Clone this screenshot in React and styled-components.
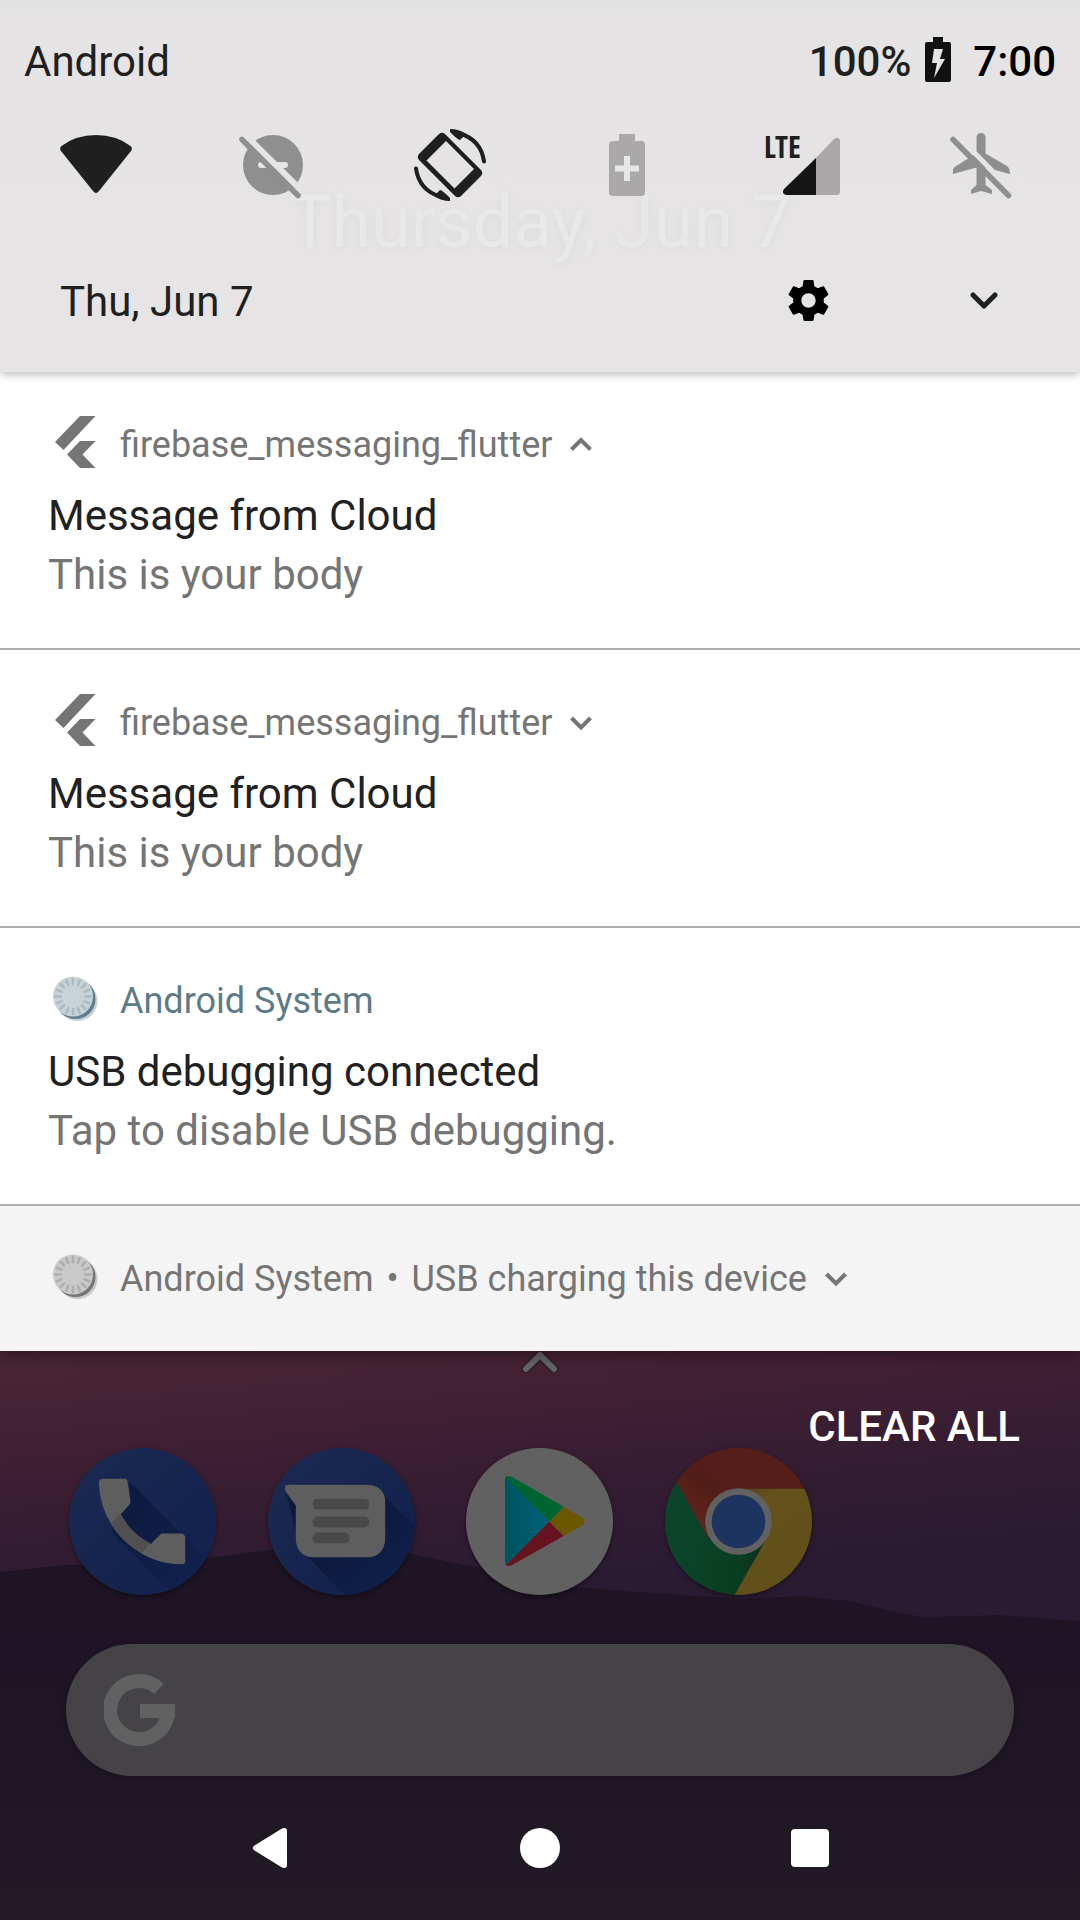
import React from "react";
import styled, { createGlobalStyle } from "styled-components";

const Global = createGlobalStyle`
  *, *::before, *::after { box-sizing: border-box; }
  body { margin: 0; background: #1f1725; font-family: Roboto, "Liberation Sans", sans-serif; }
  button { font: inherit; color: inherit; background: none; border: 0; padding: 0; margin: 0; cursor: pointer; }
  svg { display: block; }
  h2, p { margin: 0; font-weight: 400; }
`;

const Screen = styled.div`
  position: relative;
  display: flex;
  flex-direction: column;
  min-height: 100vh;
  overflow: hidden;
`;

const Shade = styled.section`
  position: relative;
  z-index: 1;
  box-shadow: 0 4px 14px rgba(0, 0, 0, 0.4);
`;

const QuickPanel = styled.header`
  position: relative;
  z-index: 1;
  padding-bottom: 36px;
  color: #1f1f1f;
  background: linear-gradient(#e1e1e0 0, #e5e3e4 12px, #e6e4e5 100%);
  box-shadow: 0 2px 9px rgba(0, 0, 0, 0.3);
`;

const StatusBar = styled.div`
  display: flex;
  align-items: center;
  padding: 37px 24px 0;
  font-size: 42px;
  line-height: 50px;
`;

const StatusIcons = styled.div`
  display: flex;
  align-items: center;
  margin-left: auto;
  font-weight: 500;
`;

const Clock = styled.time`
  margin-left: 22px;
  color: #000;
`;

const BatteryIcon = styled.svg`
  margin: 0 0 4px 14px;
`;

const Tiles = styled.div`
  display: flex;
  justify-content: space-between;
  padding: 42px 63px 0 60px;
`;

const Tile = styled.button`
  position: relative;
  width: 72px;
  height: 72px;
  color: ${(p) => (p.$off ? "#8f8f8f" : "#1f1f1f")};
`;

const NetworkLabel = styled.span`
  position: absolute;
  top: 2px;
  left: -4px;
  font-family: "Open Sans Condensed", "DejaVu Sans Condensed", Roboto, sans-serif;
  font-size: 30px;
  line-height: 32px;
  font-weight: 700;
`;

const GhostDate = styled.p`
  position: absolute;
  top: 180px;
  left: 0;
  right: 0;
  text-align: center;
  font-size: 72px;
  line-height: 86px;
  color: #e9e9e9;
  text-shadow: 0 2px 10px rgba(0, 0, 0, 0.04);
`;

const DateRow = styled.div`
  display: flex;
  align-items: center;
  padding: 63px 60px 0 60px;
  font-size: 42px;
  line-height: 68px;
`;

const DateLabel = styled.time`
  padding-top: 4px;
`;

const PanelActions = styled.div`
  display: flex;
  gap: 104px;
  margin-left: auto;
`;

const IconButton = styled.button`
  width: 72px;
  height: 72px;
  display: grid;
  place-items: center;
`;

const Card = styled.article`
  padding: ${(p) => (p.$compact ? "45px 48px 44px" : "45px 48px 45px")};
  background: ${(p) => (p.$compact ? "#f4f4f4" : "#fff")};
  border-bottom: ${(p) => (p.$compact ? "0" : "2px solid #aeaeae")};
`;

const CardHeader = styled.div`
  display: flex;
  align-items: center;
  height: 56px;
  font-size: 36px;
  line-height: 42px;
  color: ${(p) => p.$tint || "#757575"};
`;

const AppIcon = styled.span`
  display: block;
  width: 54px;
  height: 54px;
  margin: 0 18px 4px 0;
`;

const Dot = styled.span`
  margin: 0 4px;
`;

const Expand = styled.button`
  width: 22px;
  height: 42px;
  margin-left: 18px;
  display: grid;
  place-items: center;
`;

const Title = styled.h2`
  margin-top: 15px;
  font-size: 42px;
  line-height: 56px;
  color: #212121;
`;

const Body = styled.p`
  padding-top: 3px;
  font-size: 42px;
  line-height: 56px;
  color: #757575;
`;

const Home = styled.main`
  position: relative;
  flex: 1;
  display: flex;
  flex-direction: column;
`;

const Wallpaper = styled.svg`
  position: absolute;
  inset: 0;
  width: 100%;
  height: 100%;
`;

const DrawerHint = styled.svg`
  position: absolute;
  top: 0;
  left: calc(50% - 20px);
`;

const ClearAll = styled.button`
  position: relative;
  align-self: flex-end;
  margin: 49px 60px 0 0;
  color: #fff;
  font-size: 42px;
  font-weight: 500;
  line-height: 54px;
`;

const Dock = styled.nav`
  position: relative;
  display: grid;
  grid-template-columns: repeat(5, 1fr);
  padding: 0 43px;
  margin-top: -6px;
`;

const AppButton = styled.button`
  justify-self: center;
  width: 147px;
  height: 147px;
  border-radius: 50%;
  box-shadow: 0 2px 5px rgba(0, 0, 0, 0.45);
`;

const SearchBar = styled.button`
  position: relative;
  display: flex;
  align-items: center;
  height: 132px;
  margin: 49px 66px 0;
  padding-left: 38px;
  border-radius: 66px;
  background: #464348;
  box-shadow: 0 2px 6px rgba(0, 0, 0, 0.3);
`;

const NavBar = styled.nav`
  position: relative;
  display: flex;
  justify-content: center;
  gap: 198px;
  margin-top: 36px;
`;

const FlutterLogo = () => (
  <svg width="54" height="54" viewBox="0 0 54 54" fill="currentColor" aria-hidden="true">
    <path d="M32 0H47.500L15.500 34 7 26z" />
    <path d="M32 25H47.500L34.500 38.500 47.500 52H32L19 38.500z" />
  </svg>
);

const SystemLogo = ({ face, edge, tick }) => (
  <svg width="54" height="54" viewBox="0 0 54 54" aria-hidden="true">
    <circle cx="29.500" cy="29" r="20" fill={face} />
    <circle cx="27.500" cy="27" r="20" fill={edge} />
    <circle cx="25" cy="24.500" r="20" fill={face} />
    {Array.from({ length: 16 }, (_, i) => (
      <path key={i} d="M25 7V12" stroke={tick} strokeWidth="2.500" strokeLinecap="round" transform={`rotate(${i * 22.5} 25 24.500)`} />
    ))}
  </svg>
);

const Chevron = ({ up }) => (
  <svg width="22" height="22" viewBox="0 0 22 22" fill="none" stroke="currentColor" strokeWidth="4" aria-hidden="true">
    <path d={up ? "M1.500 15.500L11 6 20.500 15.500" : "M1.500 6L11 15.500 20.500 6"} />
  </svg>
);

const Notification = ({ app, icon, tint, expand, title, body }) => (
  <Card>
    <CardHeader $tint={tint}>
      <AppIcon>{icon}</AppIcon>
      <span>{app}</span>
      {expand && (
        <Expand aria-label={expand === "up" ? "Collapse" : "Expand"}>
          <Chevron up={expand === "up"} />
        </Expand>
      )}
    </CardHeader>
    <Title>{title}</Title>
    <Body>{body}</Body>
  </Card>
);

const PhoneIcon = () => (
  <svg width="147" height="147" viewBox="0 0 148 148" aria-hidden="true">
    <defs>
      <linearGradient id="phoneBg" x1="0" y1="0" x2="1" y2="1">
        <stop offset="0" stopColor="#1a2a50" />
        <stop offset="1" stopColor="#11204d" />
      </linearGradient>
      <linearGradient id="phoneShadow" x1="0.2" y1="0.2" x2="0.9" y2="0.9">
        <stop offset="0" stopColor="#0e1b40" />
        <stop offset="1" stopColor="#11214e" />
      </linearGradient>
      <clipPath id="phoneClip"><circle cx="74" cy="74" r="74" /></clipPath>
    </defs>
    <circle cx="74" cy="74" r="74" fill="url(#phoneBg)" />
    <path clipPath="url(#phoneClip)" d="M60 33L148 121V148H105L42 84 52 67 62 55z" fill="url(#phoneShadow)" />
    <path d="M34 31H56Q59 31 59 34L62 54Q62 56 60 58L52 67Q62 86 82 97L93 86H113Q117 87 117 90V114Q117 117 114 117Q80 117 55 92Q31 68 30 35Q30 31 34 31z" fill="#5e5e5e" />
    <path d="M52 66Q62 86 82 96L73 106Q52 94 42 76z" fill="#505050" />
  </svg>
);

const MessagesIcon = () => (
  <svg width="147" height="147" viewBox="0 0 148 148" aria-hidden="true">
    <defs>
      <linearGradient id="msgShadow" x1="0.3" y1="0.3" x2="1" y2="1">
        <stop offset="0" stopColor="#0c193a" />
        <stop offset="1" stopColor="#11214e" />
      </linearGradient>
      <clipPath id="msgClip"><circle cx="74" cy="74" r="74" /></clipPath>
    </defs>
    <circle cx="74" cy="74" r="74" fill="url(#phoneBg)" />
    <path clipPath="url(#msgClip)" d="M18 44L112 44 148 78V148H77L32 101z" fill="url(#msgShadow)" />
    <path d="M20 37H100Q118 38 118 55V92Q117 109 100 110H46Q29 109 28 92V58L18 44Q15 38 20 37z" fill="#5e5e5e" />
    <g fill="#494949">
      <rect x="45" y="51" width="57" height="11" rx="5" />
      <rect x="45" y="69" width="57" height="11" rx="5" />
      <rect x="45" y="85" width="37" height="11" rx="5" />
    </g>
  </svg>
);

const PlayIcon = () => (
  <svg width="147" height="147" viewBox="0 0 148 148" aria-hidden="true">
    <defs>
      <linearGradient id="playBlue" x1="0" y1="0" x2="1" y2="0">
        <stop offset="0" stopColor="#00525e" />
        <stop offset="1" stopColor="#00617a" />
      </linearGradient>
      <clipPath id="playClip">
        <path d="M46 29L117 70Q122 74 117 78L46 118Q39 121 39 114V33Q39 26 46 29z" />
      </clipPath>
    </defs>
    <circle cx="74" cy="74" r="74" fill="#616161" />
    <g clipPath="url(#playClip)">
      <path d="M38 27V120L84 74z" fill="url(#playBlue)" />
      <path d="M38 20V28L84 74 110 48z" fill="#006431" />
      <path d="M38 128V120L84 74 110 100z" fill="#65131f" />
      <path d="M104 54L84 74 104 94 130 74z" fill="#6b5700" />
    </g>
  </svg>
);

const ChromeIcon = () => (
  <svg width="147" height="147" viewBox="0 0 148 148" aria-hidden="true">
    <defs>
      <clipPath id="chromeClip"><circle cx="74" cy="74" r="74" /></clipPath>
      <linearGradient id="chromeRed" x1="0.1" y1="0.6" x2="0.5" y2="0.3">
        <stop offset="0" stopColor="#5f2419" />
        <stop offset="0.5" stopColor="#521d18" />
        <stop offset="1" stopColor="#561e18" />
      </linearGradient>
      <linearGradient id="chromeGreen" x1="0.2" y1="0.5" x2="1" y2="0.7">
        <stop offset="0" stopColor="#0a4529" />
        <stop offset="0.7" stopColor="#0a3d21" />
        <stop offset="1" stopColor="#0b2f1b" />
      </linearGradient>
      <linearGradient id="chromeYellow" x1="0" y1="0" x2="0.3" y2="0.6">
        <stop offset="0" stopColor="#53401a" />
        <stop offset="0.4" stopColor="#66511c" />
        <stop offset="1" stopColor="#62501a" />
      </linearGradient>
    </defs>
    <g clipPath="url(#chromeClip)">
      <path d="M0 0H148V41H74L43 91 12 35 0 20z" fill="url(#chromeRed)" />
      <path d="M12 35L44 92 74 107 103 90 70 148H0V20z" fill="url(#chromeGreen)" />
      <path d="M74 41H148V148H70L103 90 107 70z" fill="url(#chromeYellow)" />
    </g>
    <circle cx="74" cy="74" r="33.500" fill="#616161" />
    <circle cx="74" cy="74" r="27" fill="#1c345f" />
  </svg>
);

const GoogleMark = () => (
  <svg width="72" height="72" viewBox="0 0 72 72" fill="none" stroke="#616161" strokeWidth="14" aria-hidden="true">
    <path d="M55 15A29 29 0 1 0 64 38" />
    <path d="M71 37H36" />
  </svg>
);

export default function App() {
  return (
    <>
      <Global />
      <Screen>
        <Shade>
          <QuickPanel>
            <GhostDate>Thursday, Jun 7</GhostDate>
            <StatusBar>
              <span>Android</span>
              <StatusIcons>
                <span>100%</span>
                <BatteryIcon width="26" height="46" viewBox="0 0 26 46" aria-hidden="true">
                  <path fill="#111" d="M8 0H18V5H24Q26 5 26 7V43Q26 45 24 45H2Q0 45 0 43V7Q0 5 2 5H8z" />
                  <path fill="#e6e4e5" d="M9 12H18L15 22H20L9 41 12 26H7z" />
                </BatteryIcon>
                <Clock>7:00</Clock>
              </StatusIcons>
            </StatusBar>
            <Tiles>
              <Tile aria-label="Wi-Fi">
                <svg width="72" height="72" viewBox="0 0 72 72" fill="currentColor">
                  <path d="M1.500 17Q16 6 36 6T70.500 17Q73 19 71 22L39 62Q36 66 33 62L1 22Q-1 19 1.500 17z" />
                </svg>
              </Tile>
              <Tile $off aria-label="Do not disturb">
                <svg width="72" height="72" viewBox="0 0 72 72">
                  <circle cx="36" cy="36" r="30" fill="currentColor" />
                  <rect x="21" y="33" width="30" height="6" rx="3" fill="#e6e4e5" />
                  <path d="M8 5.500L66 63" stroke="#e6e4e5" strokeWidth="6" />
                  <path d="M5 10.500L61 66.500" stroke="currentColor" strokeWidth="5.500" strokeLinecap="round" />
                </svg>
              </Tile>
              <Tile aria-label="Auto-rotate">
                <svg width="72" height="72" viewBox="0 0 72 72" fill="currentColor">
                  <path
                    fillRule="evenodd"
                    d="M25 5Q28 2.500 31 5L67 41Q69.500 44 67 47L47 67Q44 69.500 41 67L5 31Q2.500 28 5 25zM32 12L12.500 31.500 40.500 59.500 60 40z"
                  />
                  <path d="M36 0Q45 0 52 5L46 11Q44 11 36 3z" />
                  <path d="M36 72Q27 72 20 67L26 61Q28 61 36 69z" />
                  <path d="M46 4.500Q67 11 70 32.500M26 67.500Q5 61 2 39.500" fill="none" stroke="currentColor" strokeWidth="4" strokeLinecap="round" />
                </svg>
              </Tile>
              <Tile $off aria-label="Battery saver">
                <svg width="72" height="72" viewBox="0 0 72 72">
                  <path d="M28 5H44V12H50Q54 12 54 16V63Q54 67 50 67H22Q18 67 18 63V16Q18 12 22 12H28z" fill="#aaa8a9" />
                  <path d="M24 39.500H48M36 27V52" stroke="#e9e8e9" strokeWidth="6" />
                </svg>
              </Tile>
              <Tile aria-label="Mobile data">
                <svg width="72" height="72" viewBox="0 0 72 72">
                  <path d="M47 30L66 10Q70 7 72 11V63Q72 66 69 66H47z" fill="#aaa8a9" />
                  <path d="M48 29V66H18Q13 64 16 60z" fill="#151515" />
                </svg>
                <NetworkLabel>LTE</NetworkLabel>
              </Tile>
              <Tile $off aria-label="Airplane mode">
                <svg width="72" height="72" viewBox="0 0 72 72">
                  <path d="M36 4Q40.500 4 40.500 9V24.500L62 37Q65 39 65 45L40.500 38.500V56L47 61V65L36 62 26 65V61L31.500 56V38.500L8 45Q7 39 11 37L31.500 24.500V9Q31.500 4 36 4z" fill="currentColor" />
                  <path d="M12 6L67 62" stroke="#e6e4e5" strokeWidth="5" />
                  <path d="M8 10.500L63.500 66.500" stroke="currentColor" strokeWidth="5.500" strokeLinecap="round" />
                </svg>
              </Tile>
            </Tiles>
            <DateRow>
              <DateLabel>Thu, Jun 7</DateLabel>
              <PanelActions>
                <IconButton aria-label="Settings">
                  <svg width="49" height="49" viewBox="0 0 24 24" fill="#000">
                    <path d="M19.430 12.980c.040-.320.070-.640.070-.980s-.030-.660-.070-.980l2.110-1.650c.190-.150.240-.420.120-.640l-2-3.460c-.120-.220-.390-.300-.610-.220l-2.490 1c-.520-.400-1.080-.730-1.690-.980l-.380-2.650C14.460 2.180 14.250 2 14 2h-4c-.250 0-.460.180-.490.420l-.380 2.650c-.610.250-1.170.590-1.690.980l-2.490-1c-.230-.090-.490 0-.610.220l-2 3.460c-.130.220-.070.490.120.640l2.110 1.650c-.040.320-.070.650-.070.980s.030.660.070.980l-2.110 1.650c-.190.150-.240.420-.120.640l2 3.460c.120.220.390.300.610.220l2.490-1c.520.400 1.080.730 1.690.980l.380 2.650c.030.240.240.420.490.420h4c.250 0 .460-.180.490-.420l.380-2.650c.610-.250 1.170-.590 1.690-.980l2.490 1c.230.090.490 0 .610-.220l2-3.460c.120-.220.070-.490-.120-.640l-2.110-1.650zM12 15.500c-1.930 0-3.500-1.570-3.500-3.500s1.570-3.500 3.500-3.500 3.500 1.570 3.500 3.500-1.570 3.500-3.500 3.500z" />
                  </svg>
                </IconButton>
                <IconButton aria-label="Expand quick settings">
                  <svg width="28" height="18" viewBox="0 0 28 18" fill="none" stroke="#1f1f1f" strokeWidth="5" strokeLinecap="round" strokeLinejoin="round">
                    <path d="M3 4L14 15 25 4" />
                  </svg>
                </IconButton>
              </PanelActions>
            </DateRow>
          </QuickPanel>
          <Notification icon={<FlutterLogo />} app="firebase_messaging_flutter" expand="up" title="Message from Cloud" body="This is your body" />
          <Notification icon={<FlutterLogo />} app="firebase_messaging_flutter" expand="down" title="Message from Cloud" body="This is your body" />
          <Notification
            icon={<SystemLogo face="#c8d3d8" edge="#607d8b" tick="#a9bac2" />}
            tint="#5c7a88"
            app="Android System"
            title="USB debugging connected"
            body="Tap to disable USB debugging."
          />
          <Card $compact>
            <CardHeader>
              <AppIcon><SystemLogo face="#c9c9c9" edge="#757575" tick="#adadad" /></AppIcon>
              <span>Android System <Dot>•</Dot> USB charging this device</span>
              <Expand aria-label="Expand"><Chevron /></Expand>
            </CardHeader>
          </Card>
        </Shade>
        <Home>
          <Wallpaper viewBox="0 0 1080 569" preserveAspectRatio="none" aria-hidden="true">
            <defs>
              <linearGradient id="sky" gradientUnits="userSpaceOnUse" x1="0" y1="0" x2="25" y2="275">
                <stop offset="0" stopColor="#4a2735" />
                <stop offset="0.35" stopColor="#412033" />
                <stop offset="0.7" stopColor="#341c32" />
                <stop offset="1" stopColor="#2a1b33" />
              </linearGradient>
              <linearGradient id="hill" x1="0" y1="0" x2="0" y2="1">
                <stop offset="0" stopColor="#1e1424" />
                <stop offset="0.3" stopColor="#1e1425" />
                <stop offset="1" stopColor="#221a25" />
              </linearGradient>
            </defs>
            <rect width="1080" height="569" fill="url(#sky)" />
            <path d="M0 221L65 214 140 213 210 207 275 198 340 186 412 203 475 216 575 236 640 241 740 248 800 245 850 250 900 262 925 266 1000 264 1080 270V569H0z" fill="url(#hill)" />
          </Wallpaper>
          <DrawerHint width="40" height="26" viewBox="0 0 40 26" fill="none" strokeLinecap="round" strokeLinejoin="round" aria-hidden="true">
            <path d="M6 18L20 4 34 18" stroke="#351f2b" strokeWidth="10" />
            <path d="M6 18L20 4 34 18" stroke="#646464" strokeWidth="6" />
          </DrawerHint>
          <ClearAll>CLEAR ALL</ClearAll>
          <Dock aria-label="Favorites">
            <AppButton aria-label="Phone"><PhoneIcon /></AppButton>
            <AppButton aria-label="Messages"><MessagesIcon /></AppButton>
            <AppButton aria-label="Play Store"><PlayIcon /></AppButton>
            <AppButton aria-label="Chrome"><ChromeIcon /></AppButton>
          </Dock>
          <SearchBar aria-label="Google search"><GoogleMark /></SearchBar>
          <NavBar aria-label="System navigation">
            <IconButton aria-label="Back">
              <svg width="40" height="42" viewBox="0 0 40 42" fill="#fff"><path d="M4.500 18.500L32 1.500Q37 0 37 4V38Q37 42 32 40.500L4.500 23.500Q1 21 4.500 18.500z" /></svg>
            </IconButton>
            <IconButton aria-label="Home">
              <svg width="40" height="40" viewBox="0 0 40 40" fill="#fff"><circle cx="20" cy="20" r="20" /></svg>
            </IconButton>
            <IconButton aria-label="Recent apps">
              <svg width="38" height="38" viewBox="0 0 38 38" fill="#fff"><rect width="38" height="38" rx="4" /></svg>
            </IconButton>
          </NavBar>
        </Home>
      </Screen>
    </>
  );
}
